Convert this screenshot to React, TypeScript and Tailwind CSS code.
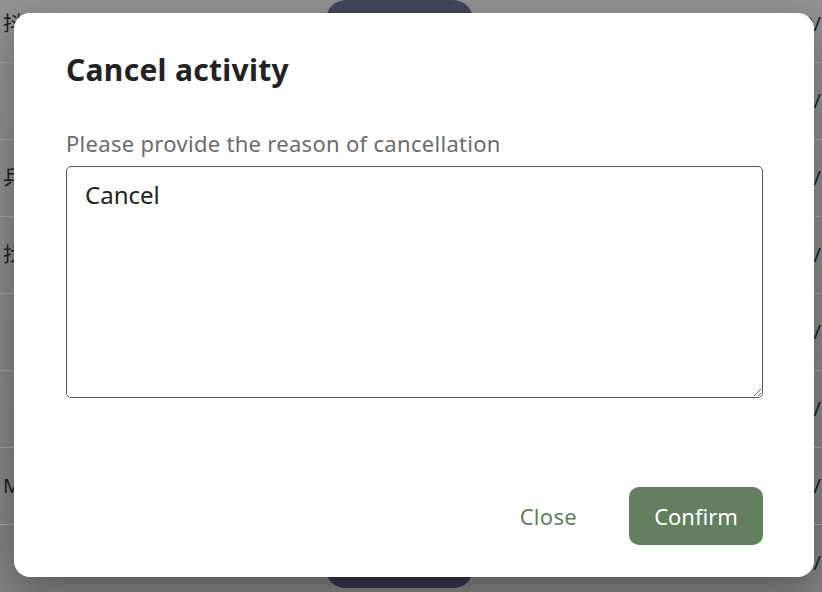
import React from "react";

const rows = [
  { left: "抖", right: "2024/10/" },
  { left: "", right: "2024/10/" },
  { left: "乒", right: "2024/10/" },
  { left: "找", right: "2024/10/" },
  { left: "", right: "2024/10/" },
  { left: "", right: "2024/10/" },
  { left: "M", right: "2024/10/" },
  { left: "", right: "2024/10/" },
];

export default function App() {
  return (
    <div
      className="relative w-[822px] h-[592px] overflow-hidden bg-gradient-to-b from-[#949494] to-[#838383]"
      style={{ fontFamily: '"Noto Sans", "Noto Sans CJK SC", sans-serif' }}
    >
      {/* background page */}
      <div className="flex flex-col -mt-[14px]">
        {rows.map((r, i) => (
          <div
            key={i}
            className="h-[77px] shrink-0 border-b border-[#a6a6a6] flex items-center justify-between text-[20px] text-[#1e1e1e]"
          >
            <span className="pl-[3px]">{r.left}</span>
            <span className="pr-[1px]">{r.right}</span>
          </div>
        ))}
      </div>
      <div className="absolute left-[326px] top-0 w-[147px] h-[40px] rounded-[22px] bg-[#44475c]" />
      <div className="absolute left-[326px] top-[550px] w-[147px] h-[38px] rounded-[22px] bg-[#33364a]" />

      {/* modal */}
      <div className="absolute left-[14px] top-[13px] w-[800px] h-[564px] bg-white rounded-[16px] shadow-[0_12px_40px_rgba(0,0,0,0.35)] flex flex-col pl-[52px] pr-[51px] pt-[37px] pb-[32px]">
        <h2 className="text-[30px] font-bold text-[#222222] leading-[40px] tracking-[0.3px]">Cancel activity</h2>
        <label className="mt-[38px] text-[22px] text-[#6c6c6c] leading-[30px] tracking-[0.3px]">
          Please provide the reason of cancellation
        </label>
        <textarea
          defaultValue="Cancel"
          className="mt-[8px] h-[232px] w-full rounded-[5px] border border-[#5a5a5a] px-[18px] py-[10px] text-[24px] text-[#222222] outline-none resize-y"
          style={{ fontFamily: '"Noto Sans", sans-serif' }}
        />
        <div className="mt-auto flex items-center justify-end gap-[52px]">
          <button className="text-[22px] text-[#5f7f5d] tracking-[0.3px]">Close</button>
          <button className="w-[134px] h-[58px] rounded-[10px] bg-[#62805f] text-white text-[22px]">
            Confirm
          </button>
        </div>
      </div>
    </div>
  );
}
